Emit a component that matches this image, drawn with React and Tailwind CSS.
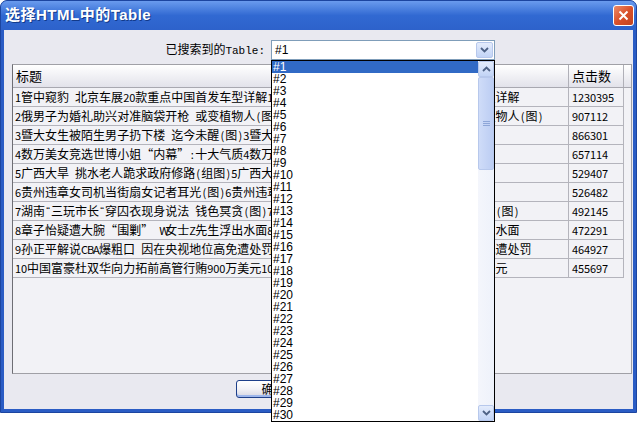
import React from "react";

const rows = [
  { t: "1管中窥豹 北京车展20款重点中国首发车型详解", n: "1230395" },
  { t: "2俄男子为婚礼助兴对准脑袋开枪 或变植物人(图)", n: "907112" },
  { t: "3暨大女生被陌生男子扔下楼 迄今未醒(图)", n: "866301" },
  { t: "4数万美女竞选世博小姐“内幕”:十大气质", n: "657114" },
  { t: "5广西大旱 挑水老人跪求政府修路(组图)", n: "529407" },
  { t: "6贵州违章女司机当街扇女记者耳光(图)", n: "526482" },
  { t: "7湖南“三玩市长“穿囚衣现身说法 钱色冥贪(图)", n: "492145", halfQuotes: true },
  { t: "8章子怡疑遭大腕“围剿” W女士Z先生浮出水面", n: "472291" },
  { t: "9孙正平解说CBA爆粗口 因在央视地位高免遭处罚", n: "464927" },
  { t: "10中国富豪杜双华向力拓前高管行贿900万美元", n: "455697" },
];

const items = Array.from({ length: 30 }, (_, i) => "#" + (i + 1));

const font = { fontFamily: '"Liberation Sans", "Noto Sans CJK SC", sans-serif' };
const cjk = { fontFamily: '"Noto Sans CJK SC", "Liberation Sans", sans-serif' };
const latin = { fontFamily: '"Liberation Sans", sans-serif' };

// half-width chars take 6px like the old bitmap song font
const CellText = ({ text, halfQuotes }) =>
  Array.from(text).map((ch, i) => {
    const quote = halfQuotes && (ch === "“" || ch === "”");
    const half = ch.charCodeAt(0) < 128 || quote;
    return half ? (
      <span key={i} className="inline-block w-[6px] text-center text-[11px]" style={quote ? latin : undefined}>
        {ch === " " ? "\u00a0" : ch}
      </span>
    ) : (
      <span key={i}>{ch}</span>
    );
  });

const Chevron = ({ up }) => (
  <svg width="9" height="6" viewBox="0 0 9 6">
    <path
      d={up ? "M1 5 L4.5 1.5 L8 5" : "M1 1 L4.5 4.5 L8 1"}
      fill="none"
      stroke="#4d6185"
      strokeWidth="1.8"
    />
  </svg>
);

const ArrowBtn = ({ up }) => (
  <div className="w-[16px] h-[16px] flex items-center justify-center rounded-[2px] border border-[#b7c8ec] bg-gradient-to-b from-[#e4ecfc] to-[#c2d4f6]">
    <Chevron up={up} />
  </div>
);

export default function App() {
  return (
    <div className="relative w-[642px] h-[427px] bg-white overflow-hidden text-[12px] text-black" style={font}>
      {/* window */}
      <div className="w-[637px] h-[413px] flex flex-col rounded-t-[7px] bg-[#2a5cc4] border border-[#1c45a0]">
        {/* title bar */}
        <div className="h-[29px] flex items-center justify-between pl-[4px] pr-[2px] rounded-t-[6px] bg-gradient-to-b from-[#6a9bee] via-[#3169d2] to-[#2d62cb]">
          <span className="text-white font-bold text-[15px] tracking-[0.5px] [text-shadow:1px_1px_0_#123a8a]">
            选择HTML中的Table
          </span>
          <div className="w-[21px] h-[21px] rounded-[3px] border border-white bg-gradient-to-br from-[#ec8a66] via-[#d9502a] to-[#c24420] flex items-center justify-center">
            <svg width="11" height="11" viewBox="0 0 11 11">
              <path d="M1.5 1.5 L9.5 9.5 M9.5 1.5 L1.5 9.5" stroke="white" strokeWidth="2" />
            </svg>
          </div>
        </div>

        {/* body */}
        <div className="flex-1 mx-[3px] mb-[3px] bg-[#e9e9f0] flex flex-col">
          <div className="flex items-center mt-[10px] h-[20px]">
            <div className="w-[263px] flex justify-end pr-[2px]">
              <span style={cjk}>
                已搜索到的<span style={{ fontFamily: '"Liberation Mono", monospace' }} className="text-[11px]">Table:</span>
              </span>
            </div>
            <div className="ml-[4px] w-[224px] h-[20px] bg-white border border-[#7f9db9] flex items-center justify-between pl-[3px] pr-[1px]">
              <span>#1</span>
              <div className="w-[17px] h-[16px] flex items-center justify-center rounded-[2px] border border-[#b7c8ec] bg-gradient-to-b from-[#e4ecfc] to-[#c2d4f6]">
                <Chevron />
              </div>
            </div>
          </div>

          {/* table */}
          <div className="ml-[8px] mt-[4px] w-[620px] h-[310px] border border-[#a0a0a6] border-l-[#6e6e74] bg-[#f2f2f6] flex flex-col" style={cjk}>
            <div className="h-[23px] flex shrink-0 bg-gradient-to-b from-[#ffffff] to-[#e2e2ea] border-b border-[#a8a8b0]">
              <div className="w-[556px] border-r border-[#b0b0b8] flex items-center pl-[3px] text-[13px]">标题</div>
              <div className="w-[55px] border-r border-[#b0b0b8] flex items-center pl-[3px] text-[13px]">点击数</div>
              <div className="flex-1" />
            </div>
            {rows.map((r) => (
              <div key={r.n} className="h-[19px] flex shrink-0 w-[611px] border-b border-[#b4b4bc]">
                <div className="w-[556px] border-r border-[#b4b4bc] flex items-center pl-[2px] overflow-hidden whitespace-nowrap">
                  <CellText text={r.t + r.t} halfQuotes={r.halfQuotes} />
                </div>
                <div className="w-[55px] border-r border-[#b4b4bc] flex items-center pl-[3px]">
                  <CellText text={r.n} />
                </div>
              </div>
            ))}
          </div>

          {/* buttons */}
          <div className="flex-1 flex items-start pt-[6px] pl-[232px]">
            <div className="w-[75px] h-[18px] rounded-[3px] border border-[#1d3f8a] bg-gradient-to-b from-[#ffffff] via-[#f2f2f6] to-[#d6d6e2] flex items-center justify-center shadow-[inset_0_-2px_0_#9db6ec]" style={cjk}>
              确定
            </div>
          </div>
        </div>
      </div>

      {/* opened dropdown list */}
      <div className="absolute left-[271px] top-[60px] w-[224px] h-[362px] bg-white border border-black flex">
        <div className="flex-1 flex flex-col">
          {items.map((it, i) => (
            <div
              key={it}
              className={
                "h-[12px] leading-[12px] pl-[1px] " +
                (i === 0 ? "bg-[#316ac5] text-white" : "")
              }
            >
              {it}
            </div>
          ))}
        </div>
        <div className="w-[16px] flex flex-col bg-gradient-to-r from-[#f4f6fc] to-[#eef2fb]">
          <ArrowBtn up />
          <div className="h-[93px] rounded-[2px] border border-[#b7c8ec] bg-gradient-to-r from-[#cfdcf8] to-[#bccdf3] flex items-center justify-center">
            <svg width="7" height="6" viewBox="0 0 7 6">
              <path d="M0 0.5 H7 M0 2.5 H7 M0 4.5 H7" stroke="#8ea6d8" strokeWidth="1" />
            </svg>
          </div>
          <div className="flex-1" />
          <ArrowBtn />
        </div>
      </div>
    </div>
  );
}
